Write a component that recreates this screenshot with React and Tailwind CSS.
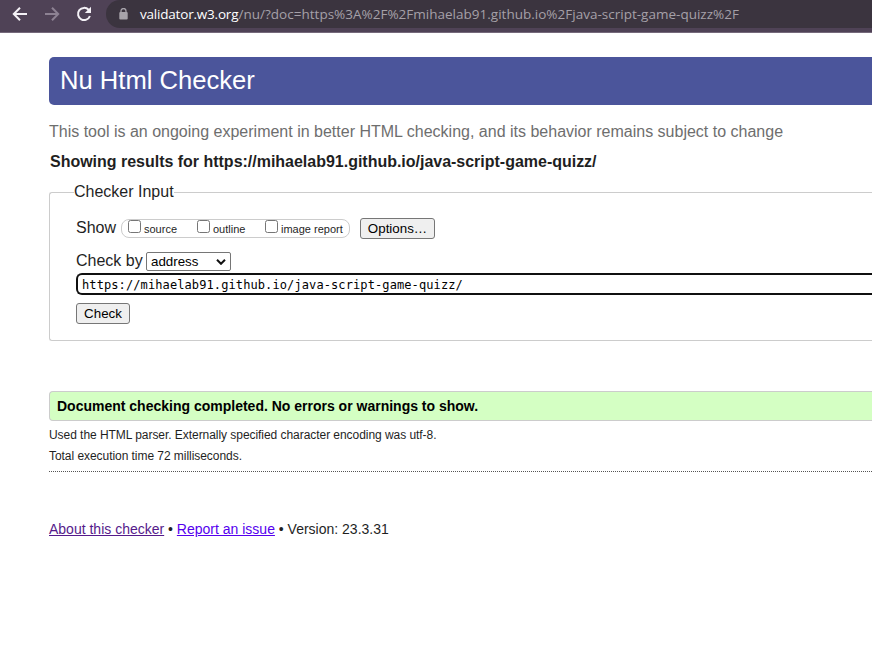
import React from "react";

function Toolbar() {
  return (
    <header className="flex h-[33px] items-start border-b border-[#75697b] bg-[#4f4256]">
      <div className="flex h-7 w-[106px] shrink-0 items-center">
        <svg className="ml-3 h-4 w-4" viewBox="0 0 16 16" fill="none" stroke="#f4f1f6" strokeWidth="2">
          <path d="M15 8H2.5M8 1.8 1.8 8 8 14.2" />
        </svg>
        <svg className="ml-4 h-4 w-4" viewBox="0 0 16 16" fill="none" stroke="#8d8293" strokeWidth="2">
          <path d="M1 8h12.5M8 1.8 14.2 8 8 14.2" />
        </svg>
        <svg className="ml-4 h-4 w-4" viewBox="0 0 16 16" fill="none" stroke="#f4f1f6" strokeWidth="2">
          <path d="M13.9 10A6.1 6.1 0 1 1 12.6 3.8L14 5.2" />
          <path d="M15 0.8V7H8.8z" fill="#f4f1f6" stroke="none" />
        </svg>
      </div>
      <div className="flex h-7 flex-1 items-center rounded-l-full bg-[#3b343f] pl-[13px]">
        <svg className="h-3 w-[9px] shrink-0" viewBox="0 0 9 12">
          <path d="M2 5V3a2.5 2.5 0 0 1 5 0v2" fill="none" stroke="#a7a3aa" strokeWidth="1.3" />
          <rect x="0.3" y="4" width="8.4" height="7.5" rx="1" fill="#a7a3aa" />
        </svg>
        <div className="ml-3 flex whitespace-nowrap font-['Open_Sans','Noto_Sans',sans-serif] text-[13.5px] leading-7 text-[#a5a0a8]">
          <span className="w-[98.5px] tracking-[-0.2px] text-white">validator.w3.org</span>
          <span className="tracking-[0.01px]">/nu/?doc=https%3A%2F%2Fmihaelab91.github.io%2Fjava-script-game-quizz%2F</span>
        </div>
      </div>
    </header>
  );
}

function ShowOption({ label, className }) {
  return (
    <label className={"flex " + className}>
      <input type="checkbox" className="h-[13px] w-[13px] shrink-0" />
      <span className="ml-[3px] text-[11px] leading-[19px]">{label}</span>
    </label>
  );
}

const buttonStyle =
  "h-[21px] rounded-[3px] border border-[#767676] bg-[#efefef] text-center text-[13.333px] leading-[19px] text-black";

export default function App() {
  return (
    <div className="h-[666px] w-[872px] overflow-hidden bg-white font-['Liberation_Sans',Arial,sans-serif] text-[#1f1f1f]">
      <Toolbar />
      <main className="ml-[49px] pt-6">
        <h1 className="h-12 rounded-l-[5px] bg-[#4b559b] pl-[11px] text-[25.6px] leading-[46px] text-white">
          Nu Html Checker
        </h1>
        <p className="mt-[17px] text-[16px] leading-5 text-[#6e6e6e]">
          This tool is an ongoing experiment in better HTML checking, and its behavior remains subject to change
        </p>
        <h2 className="mt-[10px] pl-px text-[16px] leading-5 font-bold tracking-[-0.015px]">
          Showing results for https://mihaelab91.github.io/java-script-game-quizz/
        </h2>
        <fieldset className="mt-[10px] h-[159px] rounded-l-[3px] border border-r-0 border-[#ccc] pl-[26px]">
          <legend className="-ml-[2px] text-[16px] leading-5">Checker Input</legend>
          <div className="mt-4 flex h-[21px] items-start">
            <span className="w-[45px] text-[16px] leading-[19px]">Show</span>
            <div className="mt-px flex h-[19px] w-[229px] rounded-[8px] border border-[#ccc] pl-[6px]">
              <ShowOption label="source" className="w-[69px]" />
              <ShowOption label="outline" className="w-[68px]" />
              <ShowOption label="image report" className="whitespace-nowrap" />
            </div>
            <button className={buttonStyle + " ml-[10px] w-[75px]"}>Options…</button>
          </div>
          <div className="mt-3 flex h-[21px] items-center">
            <span className="w-[70px] pb-[2px] text-[16px] leading-[19px]">Check by</span>
            <button className="flex h-[19px] w-[85px] items-center justify-between rounded-[2px] border border-[#767676] bg-white pr-1 pl-1 text-[13.333px] leading-[17px] text-black">
              address
              <svg className="h-[6px] w-[10px]" viewBox="0 0 10 6" fill="none" stroke="#111" strokeWidth="2">
                <path d="m1 0.8 4 4 4-4" />
              </svg>
            </button>
          </div>
          <div className="mt-px h-[22px] rounded-l-[6px] border-2 border-r-0 border-[#101010] pl-1 font-['DejaVu_Sans_Mono',monospace] text-[12px] leading-[21px] tracking-[0.1px] text-black">
            https://mihaelab91.github.io/java-script-game-quizz/
          </div>
          <button className={buttonStyle + " mt-2 block w-[54px]"}>Check</button>
        </fieldset>
        <p className="mt-[50px] h-[30px] rounded-l-[4px] border border-r-0 border-[#ccc] bg-[#d4ffc3] pl-[7px] text-[14px] leading-7 font-bold text-black">
          Document checking completed. No errors or warnings to show.
        </p>
        <div className="border-b border-dotted border-[#555] pt-1 pb-1 text-[12px] leading-[21px] tracking-[-0.05px]">
          <p>Used the HTML parser. Externally specified character encoding was utf-8.</p>
          <p>Total execution time 72 milliseconds.</p>
        </div>
        <footer className="mt-[47px] text-[14px] leading-5">
          <a className="text-[#551a8b] underline">About this checker</a> •{" "}
          <a className="text-[#5500ee] underline">Report an issue</a> • Version: 23.3.31
        </footer>
      </main>
    </div>
  );
}
